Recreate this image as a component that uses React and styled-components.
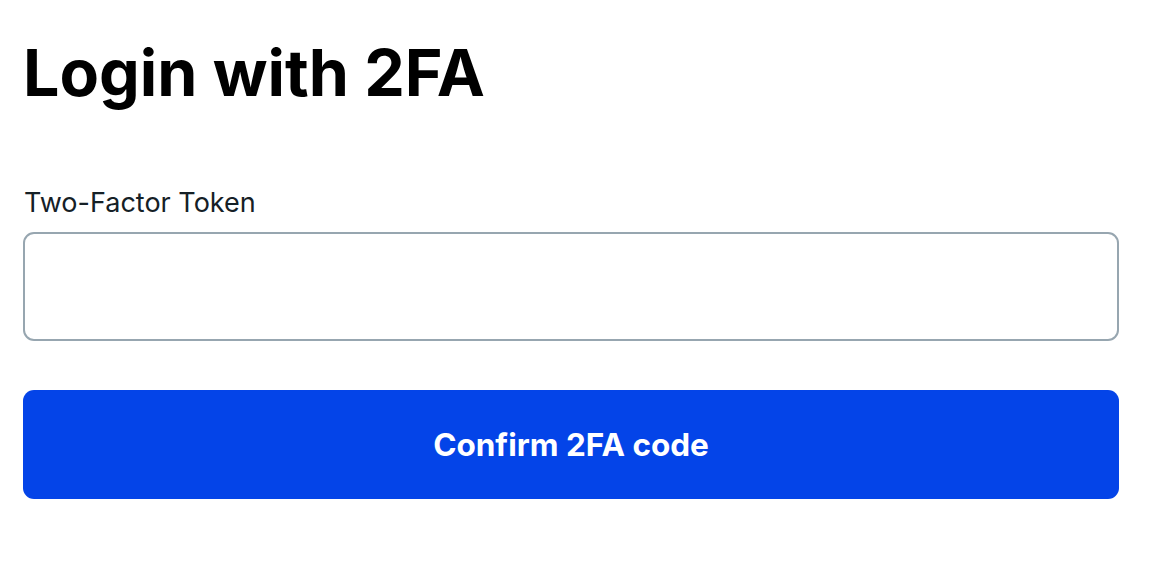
import React from "react";
import styled, { createGlobalStyle } from "styled-components";

const GlobalStyle = createGlobalStyle`
  * { box-sizing: border-box; }
  body {
    margin: 0;
    background: #fff;
    font-family: Inter, "Liberation Sans", Arial, sans-serif;
  }
`;

const Page = styled.main`
  width: 1096px;
  margin-left: 23px;
  padding-top: 35px;
`;

const Title = styled.h1`
  margin: 0;
  font-size: 64.5px;
  font-weight: 700;
  line-height: 76px;
  color: #000;
`;

const Form = styled.form`
  margin-top: 77px;
  display: flex;
  flex-direction: column;
`;

const Label = styled.label`
  font-size: 27px;
  line-height: 30px;
  color: #152026;
  margin-left: 1px;
`;

const Input = styled.input`
  margin-top: 14px;
  height: 109px;
  border: 2px solid #97a6b0;
  border-radius: 11px;
  padding: 0 20px;
  font-size: 27px;
  font-family: inherit;
  outline: none;
`;

const Button = styled.button`
  margin-top: 49px;
  height: 109px;
  border: none;
  border-radius: 11px;
  background: #0444e8;
  color: #fff;
  font-family: inherit;
  font-size: 31.5px;
  font-weight: 700;
  cursor: pointer;
`;

export default function App() {
  return (
    <>
      <GlobalStyle />
      <Page>
        <Title>Login with 2FA</Title>
        <Form onSubmit={(e) => e.preventDefault()}>
          <Label htmlFor="token">Two-Factor Token</Label>
          <Input id="token" type="text" />
          <Button type="submit">Confirm 2FA code</Button>
        </Form>
      </Page>
    </>
  );
}
